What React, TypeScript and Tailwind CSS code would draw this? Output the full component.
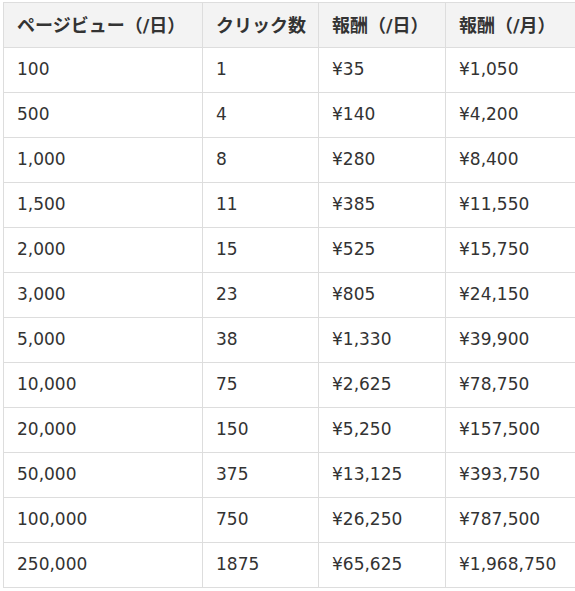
const rows: [string, string, string, string][] = [
  ['100', '1', '¥35', '¥1,050'],
  ['500', '4', '¥140', '¥4,200'],
  ['1,000', '8', '¥280', '¥8,400'],
  ['1,500', '11', '¥385', '¥11,550'],
  ['2,000', '15', '¥525', '¥15,750'],
  ['3,000', '23', '¥805', '¥24,150'],
  ['5,000', '38', '¥1,330', '¥39,900'],
  ['10,000', '75', '¥2,625', '¥78,750'],
  ['20,000', '150', '¥5,250', '¥157,500'],
  ['50,000', '375', '¥13,125', '¥393,750'],
  ['100,000', '750', '¥26,250', '¥787,500'],
  ['250,000', '1875', '¥65,625', '¥1,968,750'],
]

const headers = ['ページビュー（/日）', 'クリック数', '報酬（/日）', '報酬（/月）']

export default function App() {
  return (
    <div className="bg-white pt-[2px] pl-[3px] font-['DejaVu_Sans','Noto_Sans_CJK_JP',sans-serif] text-[#333]">
      <table className="w-[572px] table-fixed border-collapse">
        <colgroup>
          <col className="w-[199px]" />
          <col className="w-[116px]" />
          <col className="w-[127px]" />
          <col className="w-[130px]" />
        </colgroup>
        <thead>
          <tr className="h-[45px] bg-[#f3f3f3]">
            {headers.map((h) => (
              <th
                key={h}
                className="border border-[#dddddd] px-[13px] text-left align-middle text-[18px] font-bold whitespace-nowrap"
              >
                {h}
              </th>
            ))}
          </tr>
        </thead>
        <tbody>
          {rows.map((r) => (
            <tr key={r[0]} className="h-[45px]">
              {r.map((c, i) => (
                <td
                  key={i}
                  className="border border-[#dddddd] px-[13px] align-middle text-[17px] whitespace-nowrap"
                >
                  {c}
                </td>
              ))}
            </tr>
          ))}
        </tbody>
      </table>
    </div>
  )
}
